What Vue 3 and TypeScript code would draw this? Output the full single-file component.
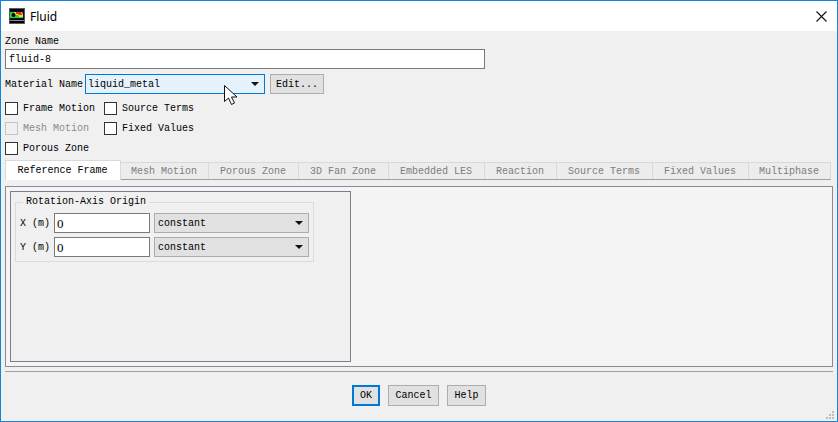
<script setup lang="ts">
interface Tab { label: string; width: number }
const tabs: Tab[] = [
  { label: 'Mesh Motion', width: 88 },
  { label: 'Porous Zone', width: 90 },
  { label: '3D Fan Zone', width: 90 },
  { label: 'Embedded LES', width: 96 },
  { label: 'Reaction', width: 72 },
  { label: 'Source Terms', width: 96 },
  { label: 'Fixed Values', width: 96 },
  { label: 'Multiphase', width: 82 },
]
const axes = ['X (m)', 'Y (m)']
const grip = [
  [6, 0], [3, 3], [6, 3], [0, 6], [3, 6], [6, 6],
]
</script>

<template>
  <div class="window">
    <header class="titlebar">
      <svg class="app-icon" width="16" height="16" viewBox="0 0 16 16">
        <rect width="16" height="16" fill="#5a5a5a" />
        <rect x="1" y="1" width="14" height="14" fill="#000" />
        <rect x="1" y="3" width="14" height="8" fill="#0a0a50" />
        <path d="M1 4h12l1 3v3H1z" fill="#22d040" />
        <path d="M5 4h8l1 3v2h-4l-1-2H6z" fill="#f4e020" />
        <path d="M7 4h5l1 3h-3l-1-1H7z" fill="#e83018" />
        <circle cx="4.5" cy="7" r="2" fill="#000" />
        <rect x="1" y="12" width="14" height="1" fill="#8a8a8a" />
      </svg>
      <span class="title">Fluid</span>
      <svg class="close" width="11" height="11" viewBox="0 0 11 11">
        <path d="M.5.5l10 10M10.500.5l-10 10" stroke="#111" stroke-width="1.1" fill="none" />
      </svg>
    </header>

    <main class="body">
      <label class="zone-label">Zone Name</label>
      <div class="field zone-input">fluid-8</div>

      <div class="material-row">
        <span class="material-label">Material Name</span>
        <div class="select focused">
          <span>liquid_metal</span>
          <i class="caret"></i>
        </div>
        <button class="btn edit">Edit...</button>
      </div>

      <div class="checks">
        <div class="check"><i class="box"></i>Frame Motion</div>
        <div class="check"><i class="box"></i>Source Terms</div>
        <div class="check disabled"><i class="box"></i>Mesh Motion</div>
        <div class="check"><i class="box"></i>Fixed Values</div>
        <div class="check"><i class="box"></i>Porous Zone</div>
      </div>

      <nav class="tabs">
        <div class="tab active">Reference Frame</div>
        <div
          v-for="t in tabs"
          :key="t.label"
          class="tab"
          :style="{ width: t.width + 'px' }"
        >{{ t.label }}</div>
      </nav>

      <section class="panel">
        <div class="frame">
          <fieldset class="group">
            <legend>Rotation-Axis Origin</legend>
            <div v-for="a in axes" :key="a" class="axis-row">
              <span class="axis-label">{{ a }}</span>
              <div class="field axis-input">0</div>
              <div class="select axis-select">
                <span>constant</span>
                <i class="caret"></i>
              </div>
            </div>
          </fieldset>
        </div>
      </section>

      <div class="separator"></div>

      <footer class="actions">
        <button class="btn ok">OK</button>
        <button class="btn cancel">Cancel</button>
        <button class="btn help">Help</button>
      </footer>
    </main>

    <svg class="cursor" width="15" height="22" viewBox="0 0 15 22">
      <path d="M.5.500V16.500L4.500 13l3 6.500 3-1.500-3-6h5.500z" fill="#fff" stroke="#111" stroke-width="1" />
    </svg>

    <i
      v-for="(g, i) in grip"
      :key="i"
      class="grip"
      :style="{ left: 825 + g[0] + 'px', top: 410 + g[1] + 'px' }"
    ></i>
  </div>
</template>

<style scoped>
.window {
  position: relative;
  width: 838px;
  height: 422px;
  box-sizing: border-box;
  border: 1px solid #1683d8;
  background: #f0f0f0;
  font-family: "Liberation Mono", monospace;
  font-size: 10px;
  color: #000;
  overflow: hidden;
}
.titlebar {
  height: 30px;
  background: #fff;
  display: flex;
  align-items: center;
  padding: 0 10px 0 8px;
}
.app-icon { margin-right: 5px; }
.title {
  font-family: "Noto Sans", sans-serif;
  font-size: 12px;
  color: #000;
}
.close { margin-left: auto; }
.body {
  display: flex;
  flex-direction: column;
  padding: 0 4px;
}
.zone-label {
  height: 18px;
  line-height: 22px;
}
.field {
  box-sizing: border-box;
  height: 20px;
  line-height: 19px;
  background: #fff;
  border: 1px solid #7a7a7a;
  padding-left: 3px;
}
.zone-input { width: 480px; margin-bottom: 5px; }
.material-row {
  display: flex;
  align-items: center;
  height: 20px;
  margin-bottom: 4px;
}
.material-label { width: 80px; }
.select {
  box-sizing: border-box;
  display: flex;
  align-items: center;
  justify-content: space-between;
  height: 20px;
  background: #e1e1e1;
  border: 1px solid #adadad;
  padding: 0 5px 0 3px;
}
.select.focused {
  width: 180px;
  padding-left: 2px;
  background: #e5f1fb;
  border-color: #0078d7;
}
.caret {
  width: 0;
  height: 0;
  border-left: 4px solid transparent;
  border-right: 4px solid transparent;
  border-top: 4px solid #111;
}
.btn {
  box-sizing: border-box;
  height: 21px;
  padding: 0 0 1px;
  background: #e1e1e1;
  border: 1px solid #adadad;
  font: inherit;
  color: #000;
}
.edit { width: 54px; height: 20px; margin-left: 5px; padding-bottom: 0; }
.checks {
  display: grid;
  grid-template-columns: 99px 1fr;
  grid-auto-rows: 20px;
  height: 60px;
  margin-bottom: 2px;
}
.check {
  display: flex;
  align-items: center;
  height: 20px;
}
.check:nth-child(5) { grid-column: 1; }
.box {
  box-sizing: border-box;
  width: 13px;
  height: 13px;
  margin-right: 5px;
  background: #fff;
  border: 1px solid #333;
}
.check.disabled { color: #8a8a8a; }
.check.disabled .box { border-color: #c4c4c4; background: #f0f0f0; }
.tabs {
  display: flex;
  align-items: flex-end;
  height: 20px;
  border-bottom: 1px solid #a0a0a0;
  box-sizing: border-box;
  width: 826px;
}
.tab {
  box-sizing: border-box;
  height: 17px;
  text-align: center;
  line-height: 18px;
  padding-right: 1px;
  color: #7d7d7d;
  background: #ececec;
  border: 1px solid #d9d9d9;
  border-left: 0;
  border-bottom: 0;
}
.tab.active {
  width: 116px;
  height: 20px;
  line-height: 20px;
  margin-bottom: -1px;
  color: #000;
  background: #fff;
  border: 1px solid #d9d9d9;
  border-bottom: 0;
}
.panel {
  box-sizing: border-box;
  width: 828px;
  height: 181px;
  margin-top: 6px;
  padding: 4px;
  background: #f4f4f4;
  border: 1px solid #8a8a96;
}
.frame {
  box-sizing: border-box;
  width: 341px;
  height: 171px;
  padding: 5px 4px;
  border: 1px solid #7d7d8a;
  background: #f0f0f0;
}
.group {
  box-sizing: border-box;
  width: 299px;
  height: 65px;
  margin: 0;
  padding: 6px 4px 0;
  border: 1px solid #dcdcdc;
}
.group legend {
  padding: 0 3px;
  margin-left: 3px;
  line-height: 10px;
}
.axis-row {
  display: flex;
  align-items: center;
  height: 20px;
  margin-bottom: 4px;
}
.axis-label { width: 34px; }
.axis-input {
  width: 96px;
  padding-left: 2px;
  font-family: "Liberation Serif", serif;
  font-size: 13px;
}
.axis-select { width: 155px; margin-left: 4px; padding-right: 5px; }
.separator {
  height: 0;
  margin-top: 4px;
  width: 828px;
  border-top: 1px solid #a0a0a0;
}
.actions {
  display: flex;
  justify-content: center;
  gap: 8px;
  margin-top: 13px;
}
.ok { width: 28px; border: 2px solid #0078d7; }
.cancel { width: 51px; }
.help { width: 39px; }
.cursor {
  position: absolute;
  left: 223px;
  top: 84px;
}
.grip {
  position: absolute;
  width: 2px;
  height: 2px;
  background: #bdbdbd;
}
</style>
